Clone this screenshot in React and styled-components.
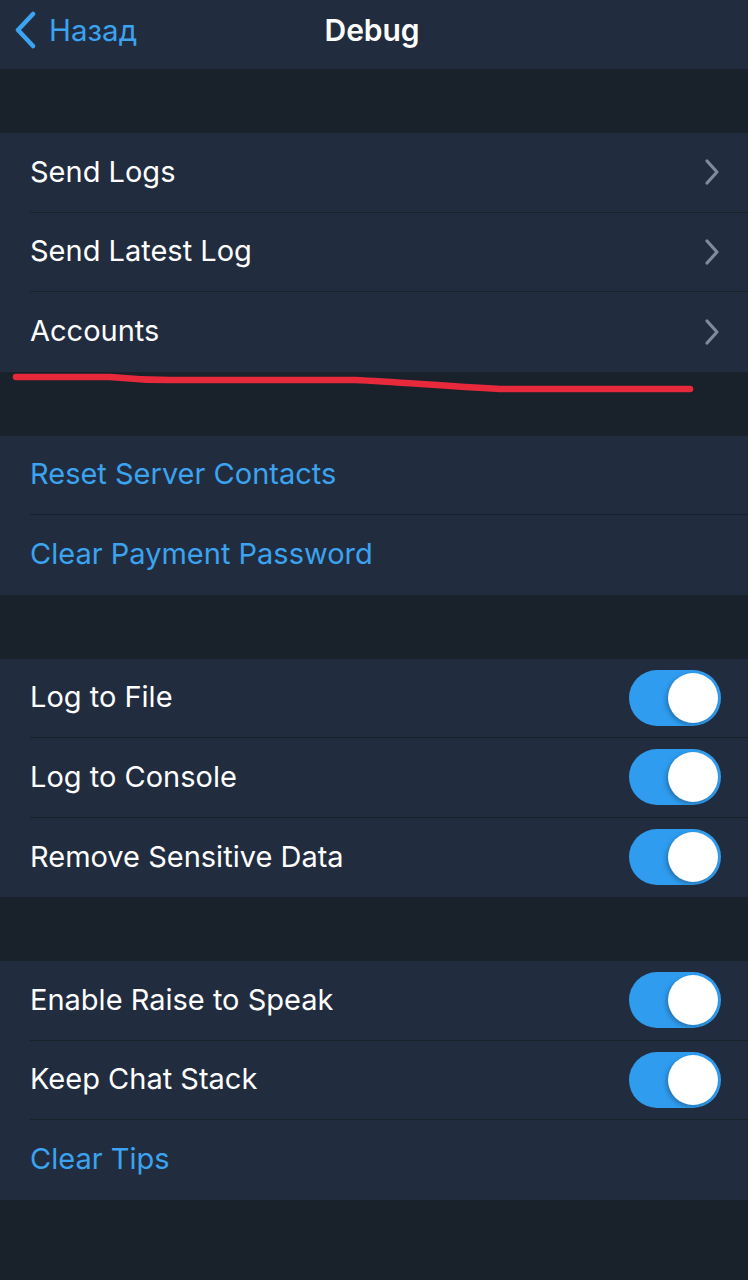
import React from "react";
import styled, { createGlobalStyle } from "styled-components";

const Global = createGlobalStyle`
  html, body { margin: 0; padding: 0; background: #19212b; }
  body { font-family: Inter, "Noto Sans", sans-serif; -webkit-font-smoothing: antialiased; }
`;

const Page = styled.div`
  position: relative;
  width: 748px;
  min-height: 1280px;
  background: #19212b;
  display: flex;
  flex-direction: column;
`;

const NavBar = styled.header`
  height: 69px;
  box-sizing: border-box;
  padding-bottom: 9px;
  background: #212d3e;
  display: grid;
  grid-template-columns: 1fr auto 1fr;
  align-items: center;
`;

const BackButton = styled.div`
  display: flex;
  align-items: center;
  gap: 12px;
  padding-left: 13px;
  color: #3ba3f0;
  font-size: 29.5px;
  letter-spacing: 0px;
`;

const Title = styled.div`
  color: #ffffff;
  font-size: 30px;
  font-weight: 600;
  letter-spacing: -0.1px;
  margin-left: -4px;
`;

const Sections = styled.div`
  display: flex;
  flex-direction: column;
  gap: 64px;
  padding-top: 64px;
`;

const Section = styled.section`
  background: #212d3e;
  display: flex;
  flex-direction: column;
`;

const Row = styled.div`
  height: 79.5px;
  box-sizing: border-box;
  margin-left: 30px;
  padding-right: 28px;
  display: flex;
  align-items: center;
  justify-content: space-between;
  border-bottom: ${(p) => (p.$last ? "none" : "1px solid #19212b")};
`;

const Label = styled.span`
  font-size: 29px;
  color: ${(p) => (p.$accent ? "#3ba3f0" : "#ffffff")};
  letter-spacing: 0px;
  margin-top: -2px;
`;

const Toggle = styled.div`
  width: 92px;
  height: 56px;
  border-radius: 28px;
  background: #2f9cf0;
  position: relative;
  margin-right: -1px;
`;

const Knob = styled.div`
  position: absolute;
  top: 3px;
  right: 3px;
  width: 50px;
  height: 50px;
  border-radius: 50%;
  background: #ffffff;
  box-shadow: -2px 2px 4px rgba(0, 0, 0, 0.25);
`;

const Scribble = styled.svg`
  position: absolute;
  left: 0;
  top: 0;
  pointer-events: none;
`;

const Chevron = () => (
  <svg width="16" height="28" viewBox="0 0 16 28">
    <path d="M3 3 L13 14 L3 25" fill="none" stroke="#7f8b98" strokeWidth="3.2" strokeLinecap="round" strokeLinejoin="round" />
  </svg>
);

const BackChevron = () => (
  <svg width="24" height="38" viewBox="0 0 24 38">
    <path d="M20 3 L5 19 L20 35" fill="none" stroke="#3ba3f0" strokeWidth="4.5" strokeLinecap="round" strokeLinejoin="round" />
  </svg>
);

const Switch = () => (
  <Toggle>
    <Knob />
  </Toggle>
);

const sections = [
  [
    { label: "Send Logs", kind: "nav" },
    { label: "Send Latest Log", kind: "nav" },
    { label: "Accounts", kind: "nav" },
  ],
  [
    { label: "Reset Server Contacts", kind: "action" },
    { label: "Clear Payment Password", kind: "action" },
  ],
  [
    { label: "Log to File", kind: "toggle" },
    { label: "Log to Console", kind: "toggle" },
    { label: "Remove Sensitive Data", kind: "toggle" },
  ],
  [
    { label: "Enable Raise to Speak", kind: "toggle" },
    { label: "Keep Chat Stack", kind: "toggle" },
    { label: "Clear Tips", kind: "action" },
  ],
];

export default function App() {
  return (
    <Page>
      <Global />
      <NavBar>
        <BackButton>
          <BackChevron />
          <span>Назад</span>
        </BackButton>
        <Title>Debug</Title>
        <div />
      </NavBar>
      <Sections>
        {sections.map((rows, si) => (
          <Section key={si}>
            {rows.map((r, ri) => (
              <Row key={r.label} $last={ri === rows.length - 1}>
                <Label $accent={r.kind === "action"}>{r.label}</Label>
                {r.kind === "nav" && <Chevron />}
                {r.kind === "toggle" && <Switch />}
              </Row>
            ))}
          </Section>
        ))}
      </Sections>
      <Scribble width="748" height="1280" viewBox="0 0 748 1280">
        <path
          d="M16 377 L110 377 C130 379 140 380 170 380 L355 380 C400 382 440 386 500 389 L690 389"
          fill="none"
          stroke="#e62a3c"
          strokeWidth="6.5"
          strokeLinecap="round"
          strokeLinejoin="round"
        />
      </Scribble>
    </Page>
  );
}
